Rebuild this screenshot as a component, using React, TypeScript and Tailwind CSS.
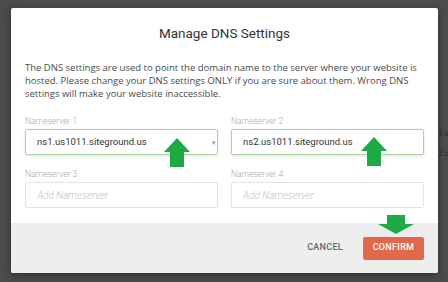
import React from 'react'

function UpArrow({ className }: { className: string }) {
  return (
    <svg className={className} width="28" height="29" viewBox="0 0 28 29">
      <path d="M14 0 L27 14 L21 14 L21 29 L7 29 L7 14 L1 14 Z" fill="#1fa846" />
    </svg>
  )
}

function DownArrow({ className }: { className: string }) {
  return (
    <svg className={className} width="36" height="19" viewBox="0 0 36 19">
      <path d="M9 0 L27 0 L27 9 L36 9 L18 19 L0 9 L9 9 Z" fill="#1fa846" />
    </svg>
  )
}

export default function App() {
  return (
    <div className="relative w-[448px] h-[282px] overflow-hidden bg-[#4c4c4c] font-['Open_Sans',sans-serif]">
      {/* page behind the overlay */}
      <div className="absolute left-[438px] top-[127px] text-[9px] text-[#2b2b2b] font-['Liberation_Serif',serif]">1.u</div>
      <div className="absolute left-[438px] top-[147px] text-[9px] text-[#2b2b2b] font-['Liberation_Serif',serif]">2.u</div>
      <div className="absolute left-[440px] top-[194px] text-[9px] text-[#3d5266] font-['Liberation_Sans',sans-serif]">M</div>

      <div className="absolute left-[11px] top-[8px] w-[427px] h-[265px] bg-white rounded-[2px] shadow-[0_2px_8px_rgba(0,0,0,0.4)] flex flex-col overflow-hidden">
        <h2 className="pt-[16px] text-center text-[13.5px] leading-[18px] text-[#333] font-['Roboto',sans-serif]">Manage DNS Settings</h2>
        <p className="mt-[19px] px-[14px] text-[9.5px] leading-[13px] text-[#4a4a4a]">
          The DNS settings are used to point the domain name to the server where your website is hosted. Please change your DNS settings ONLY if you are sure about them. Wrong DNS settings will make your website inaccessible.
        </p>

        <div className="mt-[16px] px-[14px] grid grid-cols-2 gap-x-[13px] gap-y-[14px] font-['Roboto',sans-serif]">
          <div>
            <div className="text-[8.5px] leading-[11px] font-light text-[#a8a8a8]">Nameserver 1</div>
            <div className="relative mt-[2px] h-[26px] border border-[#a6d79c] rounded-[2px] shadow-[0_1px_3px_rgba(0,0,0,0.12)] flex items-center pl-[11px] text-[9.5px] text-[#333]">
              ns1.us1011.siteground.us
              <span className="absolute right-[1px] top-[8px] text-[7px] text-[#999]">▾</span>
            </div>
          </div>
          <div>
            <div className="text-[8.5px] leading-[11px] font-light text-[#a8a8a8]">Nameserver 2</div>
            <div className="mt-[2px] h-[26px] border border-[#a6d79c] rounded-[2px] shadow-[0_1px_3px_rgba(0,0,0,0.12)] flex items-center pl-[11px] text-[9.5px] text-[#333]">
              ns2.us1011.siteground.us
            </div>
          </div>
          <div>
            <div className="text-[8.5px] leading-[11px] font-light text-[#a8a8a8]">Nameserver 3</div>
            <div className="mt-[2px] h-[26px] border border-[#e3e3e3] rounded-[2px] flex items-center pl-[11px] text-[10px] italic font-light text-[#c4c4c4]">
              Add Nameserver
            </div>
          </div>
          <div>
            <div className="text-[8.5px] leading-[11px] font-light text-[#a8a8a8]">Nameserver 4</div>
            <div className="mt-[2px] h-[26px] border border-[#e3e3e3] rounded-[2px] flex items-center pl-[11px] text-[10px] italic font-light text-[#c4c4c4]">
              Add Nameserver
            </div>
          </div>
        </div>

        <div className="mt-auto h-[50px] bg-[#efeeef] flex items-center justify-end gap-[20px] pr-[14px] font-['Roboto',sans-serif]">
          <span className="text-[9px] font-medium text-[#666] tracking-[0.3px]">CANCEL</span>
          <button className="w-[61px] h-[23px] rounded-[2px] bg-[#e1684a] text-white text-[9px] font-medium tracking-[0.3px]">CONFIRM</button>
        </div>
      </div>

      <UpArrow className="absolute left-[163px] top-[138px]" />
      <UpArrow className="absolute left-[360px] top-[137px]" />
      <DownArrow className="absolute left-[378px] top-[215px]" />
    </div>
  )
}
